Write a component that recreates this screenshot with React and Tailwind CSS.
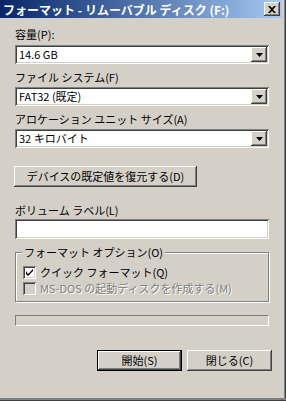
import React from "react";

const font = { fontFamily: '"MS UI Gothic", "Noto Sans CJK JP", "Liberation Sans", sans-serif' };

const sunken =
  "shadow-[inset_1px_1px_0_#808080,inset_-1px_-1px_0_#ffffff,inset_2px_2px_0_#404040,inset_-2px_-2px_0_#d4d0c8]";
const raised =
  "shadow-[inset_-1px_-1px_0_#404040,inset_1px_1px_0_#ffffff,inset_-2px_-2px_0_#808080,inset_2px_2px_0_#d4d0c8]";

const Arrow = () => (
  <div className={`absolute right-[2px] top-[2px] w-[16px] h-[15px] bg-[#d4d0c8] flex items-center justify-center ${raised}`}>
    <svg width="7" height="4" viewBox="0 0 7 4">
      <path d="M0 0h7L3.5 4z" fill="#000" />
    </svg>
  </div>
);

const Combo = ({ value, className = "" }) => (
  <div className={`relative h-[19px] w-[254px] bg-white ${sunken} ${className}`}>
    <span className="absolute left-[4px] top-[3px] text-[11px] leading-[13px] text-black">{value}</span>
    <Arrow />
  </div>
);

const Label = ({ children, className = "" }) => (
  <div className={`text-[11px] leading-[13px] text-black ${className}`}>{children}</div>
);

const Button = ({ children, className = "", primary }) =>
  primary ? (
    <div className={`border border-black ${className}`}>
      <div className={`h-full bg-[#d4d0c8] flex items-center justify-center text-[11px] ${raised}`}>{children}</div>
    </div>
  ) : (
    <div className={`bg-[#d4d0c8] flex items-center justify-center text-[11px] ${raised} ${className}`}>{children}</div>
  );

const Check = ({ checked, disabled }) => (
  <div className={`w-[13px] h-[13px] ${disabled ? "bg-[#d4d0c8]" : "bg-white"} ${sunken} flex items-center justify-center`}>
    {checked && (
      <svg width="7" height="7" viewBox="0 0 7 7">
        <path d="M0 2v3l2 2L7 2V0L2 5z" fill="#000" />
      </svg>
    )}
  </div>
);

const App = () => (
  <div style={font} className="w-[286px] h-[401px] bg-[#d4d0c8] relative overflow-hidden">
    <div className="absolute right-0 top-0 bottom-0 w-[2px] bg-[#808080] border-r border-[#404040]" />
    <div className="absolute left-0 right-0 bottom-0 h-[3px] bg-[#808080] border-b border-[#404040]" />

    <div className="mr-[4px] h-[18px] bg-gradient-to-r from-[#0a246a] to-[#a6caf0] flex items-center justify-between pl-[3px] pr-[2px]">
      <span className="text-white font-bold text-[12px] leading-[13px]">フォーマット - リムーバブル ディスク (F:)</span>
      <div className={`w-[16px] h-[14px] bg-[#d4d0c8] flex items-center justify-center ${raised}`}>
        <svg width="8" height="7" viewBox="0 0 8 7">
          <path d="M0 0h2l2 2 2-2h2L5 3.5 8 7H6L4 5 2 7H0l3-3.5z" fill="#000" />
        </svg>
      </div>
    </div>

    <div className="pl-[15px] flex flex-col">
      <Label className="mt-[10px]">容量(P):</Label>
      <Combo value="14.6 GB" className="mt-[4px]" />
      <Label className="mt-[7px]">ファイル システム(F)</Label>
      <Combo value="FAT32 (既定)" className="mt-[3px]" />
      <Label className="mt-[7px]">アロケーション ユニット サイズ(A)</Label>
      <Combo value="32 キロバイト" className="mt-[3px]" />

      <Button className="mt-[18px] -ml-[1px] w-[183px] h-[21px]">デバイスの既定値を復元する(D)</Button>

      <Label className="mt-[17px]">ボリューム ラベル(L)</Label>
      <div className={`mt-[2px] h-[20px] w-[254px] bg-white ${sunken}`} />

      <div className="mt-[13px] relative w-[254px] h-[50px] border border-[#808080] shadow-[1px_1px_0_#ffffff,inset_1px_1px_0_#ffffff]">
        <span className="absolute -top-[7px] left-[6px] px-[2px] bg-[#d4d0c8] text-[11px] leading-[13px]">フォーマット オプション(O)</span>
        <div className="absolute left-[7px] top-[13px] flex items-center gap-[4px]">
          <Check checked />
          <span className="text-[11px] leading-[13px]">クイック フォーマット(Q)</span>
        </div>
        <div className="absolute left-[7px] top-[29px] flex items-center gap-[4px]">
          <Check disabled />
          <span className="text-[11px] leading-[13px] text-[#808080] [text-shadow:1px_1px_0_#ffffff]">MS-DOS の起動ディスクを作成する(M)</span>
        </div>
      </div>

      <div className="mt-[13px] w-[254px] h-[11px] border-t border-l border-[#808080] border-b border-r border-b-white border-r-white" />

      <div className="mt-[24px] flex gap-[5px] ml-[82px]">
        <Button primary className="w-[85px] h-[21px]">開始(S)</Button>
        <Button className="w-[85px] h-[21px]">閉じる(C)</Button>
      </div>
    </div>
  </div>
);

export default App;
